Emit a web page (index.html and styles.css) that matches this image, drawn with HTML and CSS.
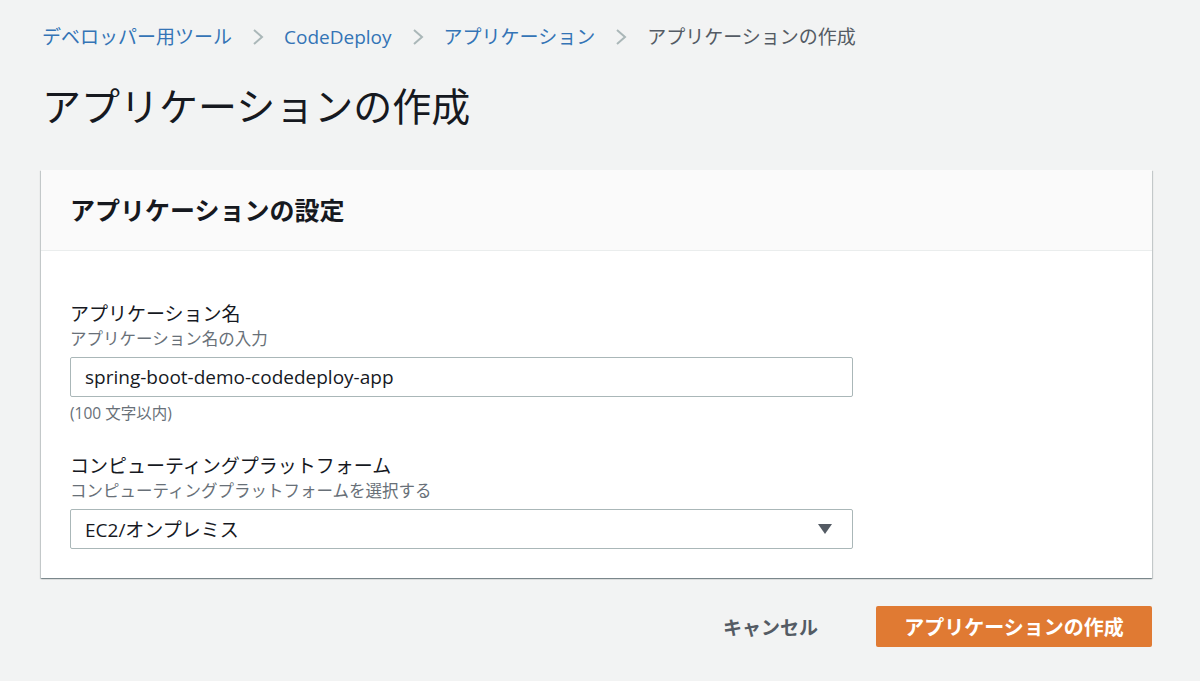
FILE: index.html
```html
<!DOCTYPE html>
<html lang="ja">
<head>
<meta charset="utf-8">
<title>アプリケーションの作成</title>
<link rel="stylesheet" href="styles.css">
</head>
<body>
<div class="page">
  <nav class="breadcrumb">
    <a class="crumb link" href="#">デベロッパー用ツール</a>
    <span class="chev"><svg width="12" height="18" viewBox="0 0 12 18"><path d="M2 2 L10 9 L2 16" fill="none" stroke="#aab7b8" stroke-width="2"/></svg></span>
    <a class="crumb link" href="#">CodeDeploy</a>
    <span class="chev"><svg width="12" height="18" viewBox="0 0 12 18"><path d="M2 2 L10 9 L2 16" fill="none" stroke="#aab7b8" stroke-width="2"/></svg></span>
    <a class="crumb link" href="#">アプリケーション</a>
    <span class="chev"><svg width="12" height="18" viewBox="0 0 12 18"><path d="M2 2 L10 9 L2 16" fill="none" stroke="#aab7b8" stroke-width="2"/></svg></span>
    <span class="crumb current">アプリケーションの作成</span>
  </nav>
  <h1 class="title">アプリケーションの作成</h1>
  <section class="panel">
    <div class="panel-header">
      <h2 class="panel-title">アプリケーションの設定</h2>
    </div>
    <div class="panel-body">
      <div class="field">
        <div class="label">アプリケーション名</div>
        <div class="desc">アプリケーション名の入力</div>
        <div class="input">spring-boot-demo-codedeploy-app</div>
        <div class="hint">(100 文字以内)</div>
      </div>
      <div class="field field2">
        <div class="label">コンピューティングプラットフォーム</div>
        <div class="desc">コンピューティングプラットフォームを選択する</div>
        <div class="input select">
          <span>EC2/オンプレミス</span>
          <svg class="caret" width="14" height="10" viewBox="0 0 14 10"><path d="M0 0 H14 L7 10 Z" fill="#545b64"/></svg>
        </div>
      </div>
    </div>
  </section>
  <div class="actions">
    <button class="btn cancel">キャンセル</button>
    <button class="btn primary">アプリケーションの作成</button>
  </div>
</div>
</body>
</html>
```
FILE: styles.css
```css
html, body {
  margin: 0;
  padding: 0;
  background: #f2f3f3;
}
body {
  font-family: "Open Sans", "Noto Sans CJK JP", sans-serif;
  color: #16191f;
}
.page {
  padding: 24px 48px 0 41px;
}
.breadcrumb {
  display: flex;
  align-items: center;
  height: 26px;
  font-size: 19px;
  padding-left: 1px;
}
.crumb {
  text-decoration: none;
  line-height: 26px;
}
.link {
  color: #3474b6;
}
.current {
  color: #545b64;
}
.chev {
  display: flex;
  align-items: center;
  margin: 0 20px 0 20px;
}
.title {
  margin: 0;
  padding-top: 33px;
  font-size: 39px;
  font-weight: 400;
  line-height: 46px;
  padding-left: 1px;
}
.panel {
  margin-top: 41px;
  background: #fff;
  box-shadow: 0 1px 1px 0 rgba(0,28,36,.3), 1px 1px 1px 0 rgba(0,28,36,.15), -1px 1px 1px 0 rgba(0,28,36,.15);
}
.panel-header {
  height: 80px;
  background: #fafafa;
  border-bottom: 1px solid #eaeded;
  display: flex;
  align-items: center;
  padding: 0 29px;
}
.panel-title {
  margin: 0;
  font-size: 25px;
  font-weight: 700;
  line-height: 30px;
}
.panel-body {
  padding: 51px 29px 29px;
}
.label {
  font-size: 19px;
  line-height: 24px;
}
.desc {
  font-size: 16.5px;
  line-height: 20px;
  color: #687078;
  margin-top: 3px;
}
.input {
  margin-top: 8px;
  width: 783px;
  height: 40px;
  box-sizing: border-box;
  border: 1px solid #aab7b8;
  border-radius: 2px;
  background: #fff;
  display: flex;
  align-items: center;
  padding: 0 14px;
  font-size: 19px;
}
.select {
  justify-content: space-between;
  padding-right: 20px;
}
.caret {
  display: block;
}
.hint {
  margin-top: 7px;
  font-size: 15.5px;
  line-height: 18px;
  color: #687078;
}
.field2 {
  margin-top: 32px;
}
.actions {
  display: flex;
  justify-content: flex-end;
  align-items: center;
  gap: 34px;
  margin-top: 28px;
}
.btn {
  font-family: "Open Sans", "Noto Sans CJK JP", sans-serif;
  font-size: 19px;
  font-weight: 700;
  border: none;
  cursor: pointer;
}
.cancel {
  background: none;
  color: #545b64;
  padding: 0 24px;
  height: 41px;
}
.primary {
  width: 276px;
  height: 41px;
  background: #e07a33;
  color: #fff;
  border-radius: 2px;
  font-size: 20px;
}
```
